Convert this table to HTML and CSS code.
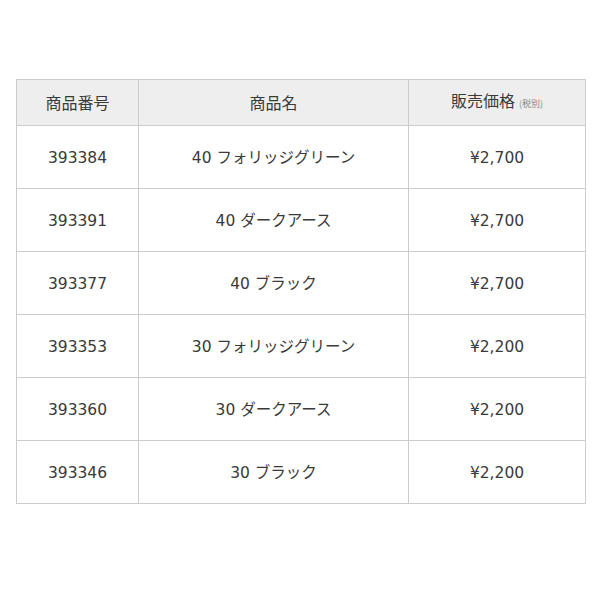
FILE: index.html
```html
<!DOCTYPE html>
<html lang="ja">
<head>
<meta charset="utf-8">
<link rel="stylesheet" href="styles.css">
</head>
<body>
<table class="spec">
  <colgroup>
    <col class="c1"><col class="c2"><col class="c3">
  </colgroup>
  <thead>
    <tr><th>商品番号</th><th>商品名</th><th>販売価格<span class="tax">(税別)</span></th></tr>
  </thead>
  <tbody>
    <tr><td>393384</td><td>40 フォリッジグリーン</td><td>¥2,700</td></tr>
    <tr><td>393391</td><td>40 ダークアース</td><td>¥2,700</td></tr>
    <tr><td>393377</td><td>40 ブラック</td><td>¥2,700</td></tr>
    <tr><td>393353</td><td>30 フォリッジグリーン</td><td>¥2,200</td></tr>
    <tr><td>393360</td><td>30 ダークアース</td><td>¥2,200</td></tr>
    <tr><td>393346</td><td>30 ブラック</td><td>¥2,200</td></tr>
  </tbody>
</table>
</body>
</html>
```
FILE: styles.css
```css
html, body {
  margin: 0;
  padding: 0;
  background: #fff;
}
body {
  padding: 79px 15px 0 16px;
  font-family: "DejaVu Sans", "Noto Sans CJK JP", sans-serif;
  color: #3a3a3a;
}
.spec {
  width: 569px;
  border-collapse: collapse;
  table-layout: fixed;
  font-size: 15.5px;
}
.c1 { width: 122px; }
.c2 { width: 270px; }
.c3 { width: 177px; }
.spec th, .spec td {
  border: 1px solid #ccc;
  text-align: center;
  padding: 0;
  font-weight: normal;
  line-height: 24px;
}
.spec th {
  background: #eeeeee;
  height: 43px;
  padding-bottom: 2px;
  font-family: "Noto Sans CJK JP", sans-serif;
  font-size: 16px;
}
.spec td {
  height: 56px;
  padding-bottom: 6px;
}
.spec td::before {
  content: "\3000";
  display: inline-block;
  width: 0;
  overflow: hidden;
  vertical-align: baseline;
  font-family: "Noto Sans CJK JP", sans-serif;
}
.tax {
  font-size: 9px;
  color: #888;
  margin-left: 4px;
}
```
